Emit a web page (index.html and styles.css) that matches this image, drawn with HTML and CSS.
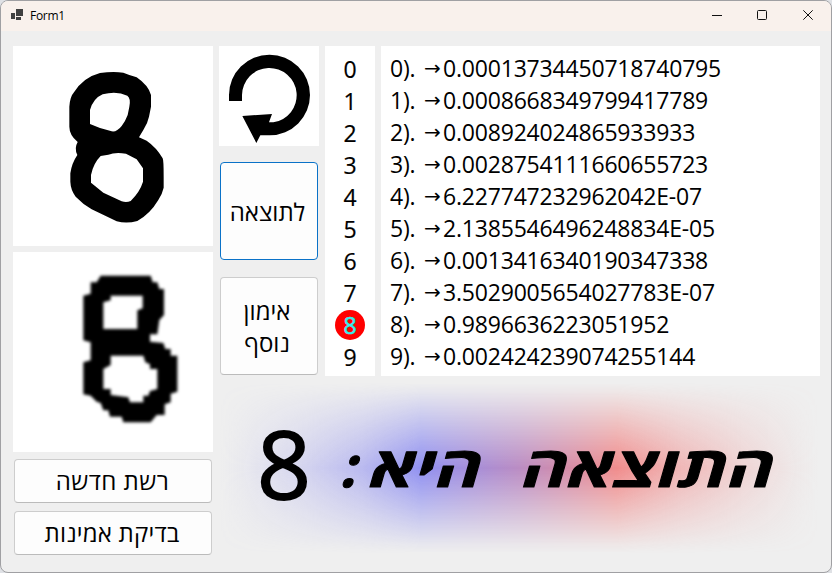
FILE: index.html
```html
<!DOCTYPE html>
<html lang="he">
<head>
<meta charset="utf-8">
<title>Form1</title>
<link rel="stylesheet" href="styles.css">
</head>
<body>
<div class="window">
  <header class="titlebar">
    <svg class="app-icon" width="12" height="11" viewBox="0 0 12 11"><path fill="#404040" d="M5 0h7v7H5zM0 4h4v6H0zM5 8h5v3H5z"/></svg>
    <span class="title">Form1</span>
    <svg class="control" width="46" height="29" viewBox="0 0 46 29"><path d="M18 14.5h10"/></svg>
    <svg class="control" width="46" height="29" viewBox="0 0 46 29"><rect x="17.5" y="9.5" width="9" height="9" rx="1"/></svg>
    <svg class="control" width="46" height="29" viewBox="0 0 46 29"><path d="M17.3 9.3l9.4 9.4M26.7 9.3l-9.4 9.4"/></svg>
  </header>
  <main class="form">
    <section class="drawings">
      <svg class="canvas" width="200" height="200" viewBox="0 0 200 200">
        <path transform="translate(-13 -46) scale(.33333)" fill-rule="evenodd" d="M300 219Q340 213 370 218L388 225L410 232Q445 256 453 285V320L447 350Q443 370 430 390L417 412L440 422Q470 443 488 475Q491 480 491 530V563Q487 582 475 600Q450 642 412 663Q380 672 350 664L275 628Q248 612 227 590Q212 570 211 545V520Q215 490 232 465Q222 445 233 426Q208 405 208 380V320Q210 290 222 277Q250 232 300 219ZM308 283Q350 272 382 287Q393 295 388 320L383 345Q376 364 365 378Q350 397 335 394L300 384L270 372V330Q280 295 308 283ZM302 468L325 464Q345 456 378 461L410 478L429 505V545Q420 575 392 603Q380 608 365 604L310 578L273 548V525Q280 490 302 468Z"/>
      </svg>
      <svg class="canvas" width="200" height="200" viewBox="0 0 200 200">
        <defs><filter id="soft"><feGaussianBlur stdDeviation="5"/></filter></defs>
        <path filter="url(#soft)" transform="translate(57 13) scale(.33333)" fill-rule="evenodd" d="M92 32H242L248 52H262L268 72H282V150L268 165L262 208H240V230L280 234L286 252H302V272H322V380L302 386V412L284 418V450H260L242 472H160L155 455H120L115 436H100L92 414L80 410L62 392L40 388V292L62 286V232L40 226V92L62 86V52H80ZM100 112L122 106V92H218V130L202 136V192H100ZM100 312L122 300V272H220L226 292L240 298V312H262V372L240 378L235 392H220V412H180L175 397L122 390V372H100Z"/>
      </svg>
      <button class="wide first">רשת חדשה</button>
      <button class="wide">בדיקת אמינות</button>
    </section>
    <section class="side">
      <div class="upper">
        <div class="actions">
          <svg class="canvas" width="100" height="100" viewBox="0 0 100 100"><path transform="translate(-9 -6) scale(.33333)" d="M57 183V165A121.500 121 0 1 1 179 286H151L139 309L97 228L186 222L177 247H190A82 82 0 1 0 96 165V183Z"/></svg>
          <button class="square focused">לתוצאה</button>
          <button class="square more">אימון<br>נוסף</button>
        </div>
        <ol class="digits"><li>0</li><li>1</li><li>2</li><li>3</li><li>4</li><li>5</li><li>6</li><li>7</li><li><span class="hit">8</span></li><li>9</li></ol>
        <ol class="scores">
          <li><span class="key">0).</span><i>→</i>0.00013734450718740795</li>
          <li><span class="key">1).</span><i>→</i>0.0008668349799417789</li>
          <li><span class="key">2).</span><i>→</i>0.008924024865933933</li>
          <li><span class="key">3).</span><i>→</i>0.0028754111660655723</li>
          <li><span class="key">4).</span><i>→</i>6.227747232962042E-07</li>
          <li><span class="key">5).</span><i>→</i>2.1385546496248834E-05</li>
          <li><span class="key">6).</span><i>→</i>0.0013416340190347338</li>
          <li><span class="key">7).</span><i>→</i>3.5029005654027783E-07</li>
          <li><span class="key">8).</span><i>→</i>0.9896636223051952</li>
          <li><span class="key">9).</span><i>→</i>0.002424239074255144</li>
        </ol>
      </div>
      <div class="result">
        <svg width="600" height="170" viewBox="0 0 600 170">
          <text class="answer" x="38" y="115.500" textLength="54" lengthAdjust="spacingAndGlyphs">8</text>
          <g class="phrase" transform="translate(0 104) skewX(-16)">
            <text x="120" y="0">:</text>
            <text x="147" y="0" textLength="112" lengthAdjust="spacingAndGlyphs">היא</text>
            <text x="299" y="0" textLength="252" lengthAdjust="spacingAndGlyphs">התוצאה</text>
          </g>
        </svg>
      </div>
    </section>
  </main>
</div>
</body>
</html>
```
FILE: styles.css
```css
* { box-sizing: border-box; }
body { margin: 0; background: #dfe1e5; font-family: "Open Sans", "Noto Sans", sans-serif; color: #000; }
.window { width: 832px; height: 573px; border: 1px solid #a0a0a3; border-radius: 8px; overflow: hidden; background: #efefef; }
.titlebar { height: 30px; background: #f9f1ec; display: flex; align-items: flex-start; padding-left: 10px; }
.app-icon { margin-top: 8px; }
.title { font-size: 12px; line-height: 29px; margin: 0 auto 0 7px; letter-spacing: -.3px; }
.control { fill: none; stroke: #111; stroke-width: 1; position: relative; left: 1px; }
.form { display: flex; gap: 6px; padding: 15px 0 0 12px; }
.canvas { display: block; background: #fff; flex: none; }
.drawings { width: 200px; display: flex; flex-direction: column; gap: 6px; }
button { font: 24px/32px "Open Sans", "Noto Sans", sans-serif; color: #000; background: #fdfdfd; border: 1px solid #cdcdcd; border-bottom-color: #bbb; border-radius: 4px; padding: 0; direction: rtl; }
.wide { height: 44px; width: 198px; margin: 2px 1px 0; padding-right: 2px; letter-spacing: .2px; }
.wide.first { margin-top: 1px; padding-right: 1px; letter-spacing: .5px; }
.side { width: 601px; }
.upper { display: flex; gap: 6px; }
.actions { width: 100px; display: flex; flex-direction: column; }
.square { width: 98px; height: 98px; margin: 16px 1px 0; padding: 1px 3px 0 0; }
.focused { border-color: #0a72c8; }
.more { margin-top: 17px; padding-right: 4px; font-size: 24px; }
ol { list-style: none; margin: 0; padding: 6px 0 0; height: 330px; background: #fff; font-size: 23px; line-height: 32px; }
.digits { width: 50px; text-align: center; padding-top: 7px; -webkit-text-stroke: .2px currentColor; }
.digits li { height: 32px; }
.hit { display: block; width: 30px; height: 30px; line-height: 31px; margin: 1px 10px 0; border-radius: 50%; background: #f00; color: #3ee; -webkit-text-stroke: .6px #3ee; }
.digits li:nth-child(9) { display: flex; }
.scores { width: 439px; padding-left: 9px; letter-spacing: -.19px; }
.scores li { display: flex; height: 32px; }
.key { width: 34px; }
.scores i { width: 19px; font: 20px/33px "DejaVu Sans", sans-serif; }
.result { position: relative; width: 600px; height: 170px; margin-top: 7px; }
.result::before { content: ""; position: absolute; inset: 0; background: linear-gradient(90deg, rgba(144,144,240,0) 0, rgba(144,144,240,.06) 4%, rgba(144,144,240,.28) 14%, rgba(144,144,240,.57) 24%, #9090f0 33.7%, #ba8cc3 50%, #f08c8c 66.3%, rgba(240,140,140,.57) 77%, rgba(240,140,140,.28) 87%, rgba(240,140,140,.06) 96%, rgba(240,140,140,0) 100%); -webkit-mask-image: linear-gradient(transparent, rgba(0,0,0,.08) 5%, rgba(0,0,0,.29) 15%, rgba(0,0,0,.72) 36%, #000 50%, rgba(0,0,0,.72) 64%, rgba(0,0,0,.29) 85%, rgba(0,0,0,.08) 95%, transparent); mask-image: linear-gradient(transparent, rgba(0,0,0,.08) 5%, rgba(0,0,0,.29) 15%, rgba(0,0,0,.72) 36%, #000 50%, rgba(0,0,0,.72) 64%, rgba(0,0,0,.29) 85%, rgba(0,0,0,.08) 95%, transparent); }
.result svg { position: relative; display: block; }
.answer { font-size: 93px; stroke: #000; stroke-width: 1.8px; }
.phrase { font-size: 56px; font-weight: 700; stroke: #000; stroke-width: 1px; stroke-linejoin: round; }
```
